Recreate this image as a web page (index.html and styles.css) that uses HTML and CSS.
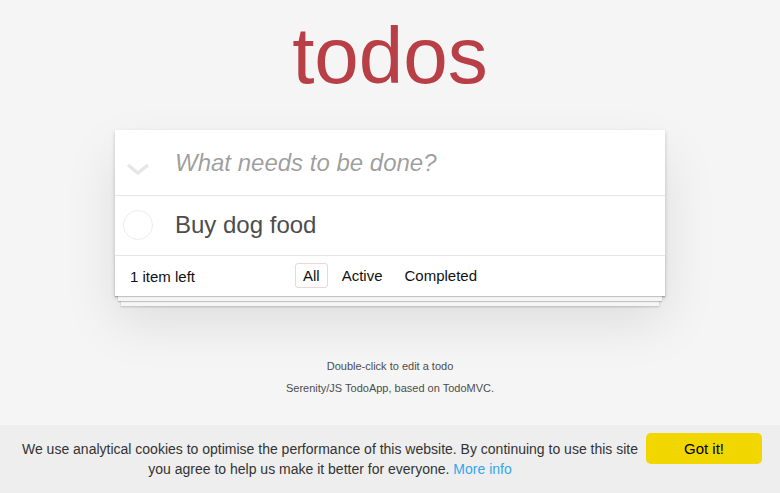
FILE: index.html
```html
<!DOCTYPE html>
<html lang="en">
<head>
    <meta charset="UTF-8">
    <meta name="viewport" content="width=device-width, initial-scale=1.0">
    <title>Serenity/JS TodoApp</title>
    <link rel="stylesheet" href="styles.css">
</head>
<body>
    <div class="page">
        <h1 class="title">todos</h1>

        <section class="todoapp">
            <header class="header">
                <label class="toggle-all" for="toggleAll">
                    <input type="checkbox" id="toggleAll">
                    <svg width="24" height="12" viewBox="0 0 24 12"><polyline points="2,2 12,10 22,2" fill="none" stroke="#e6e6e6" stroke-width="3.5" stroke-linejoin="miter"/></svg>
                </label>
                <input class="new-todo" placeholder="What needs to be done?" autofocus>
            </header>

            <ul class="todo-list">
                <li class="todo">
                    <span class="toggle">
                        <svg width="30" height="30" viewBox="0 0 30 30"><circle cx="15" cy="15" r="14.5" fill="none" stroke="#ededed" stroke-width="1"/></svg>
                    </span>
                    <label>Buy dog food</label>
                </li>
            </ul>

            <footer class="footer">
                <span class="todo-count"><strong>1</strong> item left</span>
                <ul class="filters">
                    <li><a href="#/" class="selected">All</a></li>
                    <li><a href="#/active">Active</a></li>
                    <li><a href="#/completed">Completed</a></li>
                </ul>
                <span></span>
            </footer>
        </section>

        <footer class="info">
            <p>Double-click to edit a todo</p>
            <p>Serenity/JS TodoApp, based on <a href="#">TodoMVC</a>.</p>
        </footer>
    </div>

    <div class="cookie-banner">
        <p class="cookie-message">We use analytical cookies to optimise the performance of this website. By continuing to use this site you agree to help us make it better for everyone. <a href="#">More info</a></p>
        <button class="cookie-btn" onclick="this.parentNode.style.display = 'none'">Got it!</button>
    </div>
</body>
</html>
```

FILE: styles.css
```css
body {
    margin: 0;
    padding: 0;
    font: 14px "Liberation Sans", Arial, sans-serif;
    line-height: 1.4em;
    background: #f5f5f5;
    color: #111;
}

.page {
    max-width: 550px;
    margin: 0 auto;
}

.title {
    margin: 16px 0 34px;
    font-size: 80px;
    line-height: 80px;
    font-weight: normal;
    text-align: center;
    color: #b83f45;
}

.todoapp {
    background: #fff;
    box-shadow: 0 2px 4px 0 rgba(0, 0, 0, 0.2),
                0 25px 50px 0 rgba(0, 0, 0, 0.1);
}

.header {
    display: flex;
    height: 65px;
}

.toggle-all {
    width: 60px;
    display: flex;
    align-items: center;
    padding: 12px 0 0 11px;
    box-sizing: border-box;
}

.toggle-all input {
    display: none;
}

.new-todo {
    flex: 1;
    min-width: 0;
    margin: 0;
    padding: 16px 16px 16px 0;
    border: none;
    outline: none;
    background: transparent;
    font: inherit;
    font-size: 24px;
    line-height: 1.4em;
    color: #4d4d4d;
    caret-color: #111;
}

.new-todo::placeholder {
    font-style: italic;
    color: rgba(0, 0, 0, 0.4);
}

.todo-list {
    margin: 0;
    padding: 0;
    list-style: none;
    border-top: 1px solid #e6e6e6;
}

.todo {
    display: flex;
    align-items: center;
    padding-left: 8px;
    font-size: 24px;
}

.toggle {
    display: flex;
    width: 30px;
    height: 30px;
    margin-right: 22px;
}

.todo label {
    padding: 15px 15px 15px 0;
    line-height: 1.2;
    color: #4d4d4d;
}

.footer {
    display: grid;
    grid-template-columns: 1fr auto 1fr;
    align-items: center;
    height: 20px;
    padding: 10px 15px;
    font-size: 15px;
    line-height: 21px;
    border-top: 1px solid #e6e6e6;
    box-shadow: 0 1px 1px rgba(0, 0, 0, 0.2),
                0 8px 0 -3px #f6f6f6,
                0 9px 1px -3px rgba(0, 0, 0, 0.2),
                0 16px 0 -6px #f6f6f6,
                0 17px 2px -6px rgba(0, 0, 0, 0.2);
}

.todo-count strong {
    font-weight: normal;
}

.filters {
    margin: -7px 0 -5px;
    padding: 0;
    list-style: none;
    display: flex;
}

.filters a {
    display: inline-block;
    margin: 3px;
    padding: 3px 7px;
    line-height: 17px;
    color: inherit;
    text-decoration: none;
    border: 1px solid transparent;
    border-radius: 3px;
}

.filters a.selected {
    border-color: rgba(175, 47, 47, 0.2);
}

.info {
    margin-top: 65px;
    font-size: 11px;
    color: #4d4d4d;
    text-align: center;
}

.info p {
    margin: 11px 0;
    line-height: 1;
}

.info a {
    color: inherit;
    text-decoration: none;
}

.cookie-banner {
    position: fixed;
    left: 0;
    right: 0;
    bottom: 0;
    display: flex;
    align-items: flex-start;
    padding: 8px 18px 14px 19px;
    background: #eee;
    color: #333;
    font-family: "Liberation Sans Narrow", "Liberation Sans", Arial, sans-serif;
    font-size: 14px;
}

.cookie-message {
    flex: 1;
    margin: 6px 0 0;
    line-height: 20px;
    text-align: center;
}

.cookie-message a {
    color: #31a8f0;
    text-decoration: none;
}

.cookie-btn {
    width: 116px;
    height: 31px;
    margin-left: 5px;
    border: none;
    border-radius: 5px;
    background: #f1d600;
    color: #000;
    font: inherit;
    font-size: 15px;
    cursor: pointer;
}
```
